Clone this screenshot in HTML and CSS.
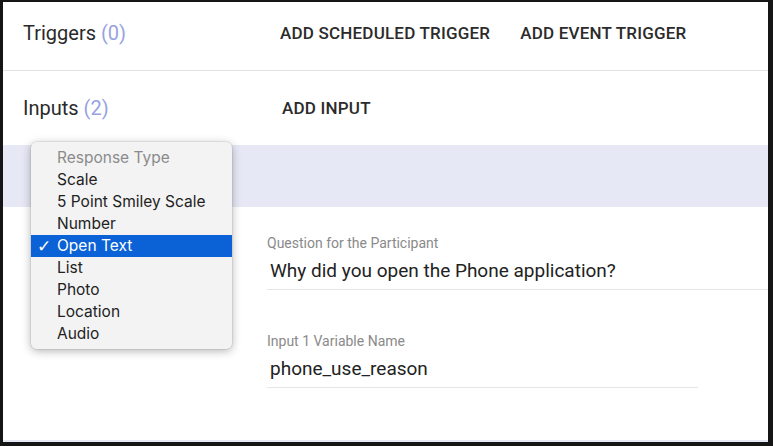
FILE: index.html
```html
<!DOCTYPE html>
<html lang="en">
<head>
    <meta charset="UTF-8">
    <meta name="viewport" content="width=device-width, initial-scale=1.0">
    <title>Inputs</title>
    <link rel="stylesheet" href="styles.css">
</head>
<body>
    <div class="frame">
        <div class="row">
            <h2 class="row-title">Triggers <span class="count">(0)</span></h2>
            <div class="actions">
                <button class="flat">Add Scheduled Trigger</button>
                <button class="flat">Add Event Trigger</button>
            </div>
        </div>
        <div class="row inputs">
            <h2 class="row-title">Inputs <span class="count">(2)</span></h2>
            <div class="actions">
                <button class="flat">Add Input</button>
            </div>
        </div>
        <div class="band"></div>
        <div class="fields">
            <div class="field wide">
                <label>Question for the Participant</label>
                <div class="value">Why did you open the Phone application?</div>
            </div>
            <div class="field">
                <label>Input 1 Variable Name</label>
                <div class="value">phone_use_reason</div>
            </div>
        </div>
        <div class="band thin"></div>

        <ul class="menu">
            <li class="menu-head">Response Type</li>
            <li>Scale</li>
            <li>5 Point Smiley Scale</li>
            <li>Number</li>
            <li class="selected"><span class="check">&#10003;</span>Open Text</li>
            <li>List</li>
            <li>Photo</li>
            <li>Location</li>
            <li>Audio</li>
        </ul>
    </div>
</body>
</html>
```

FILE: styles.css
```css
body {
    margin: 0;
    background: white;
    font-family: Roboto, "Liberation Sans", sans-serif;
    color: #222;
}
.frame {
    position: relative;
    height: 440px;
    border-style: solid;
    border-color: #151515;
    border-width: 2px 5px 4px 3px;
    display: flex;
    flex-direction: column;
    overflow: hidden;
}
.row {
    display: flex;
    align-items: center;
    height: 62px;
    padding: 0 0 6px 20px;
    border-bottom: 1px solid #e2e2e2;
}
.row.inputs {
    height: 74px;
    padding-bottom: 0;
    border-bottom: none;
}
.row-title {
    width: 249px;
    margin: 0;
    font-size: 20px;
    font-weight: 400;
    color: #2a2a2a;
}
.count {
    color: #97a3e2;
}
.actions {
    display: flex;
    gap: 14px;
}
.flat {
    background: none;
    border: none;
    padding: 6px 8px;
    font-family: Roboto, sans-serif;
    font-size: 17px;
    font-weight: 500;
    letter-spacing: 0.2px;
    text-transform: uppercase;
    color: #2b2b2b;
    cursor: pointer;
}
.inputs .flat {
    margin-left: 2px;
}
.band {
    height: 62px;
    background: #e6e8f5;
}
.band.thin {
    height: 2px;
    margin-top: auto;
}
.fields {
    padding: 28px 0 0 264px;
}
.field {
    width: 431px;
    margin-bottom: 43px;
    border-bottom: 1px solid #e6e6e6;
}
.field.wide {
    width: auto;
}
.field label {
    display: block;
    font-size: 14px;
    color: #8a8a8a;
    line-height: 17px;
}
.field .value {
    padding: 6px 0 5px 3px;
    font-size: 19px;
    line-height: 26px;
    color: #222;
}
.menu {
    position: absolute;
    left: 28px;
    top: 140px;
    width: 201px;
    margin: 0;
    padding: 5px 0 4px;
    list-style: none;
    background: #f3f3f3;
    border-radius: 6px;
    box-shadow: 0 2px 10px rgba(0, 0, 0, 0.3), 0 0 0 1px rgba(0, 0, 0, 0.06);
    font-family: Inter, "Liberation Sans", sans-serif;
    font-size: 15.5px;
}
.menu li {
    position: relative;
    height: 22px;
    line-height: 22px;
    padding-left: 26px;
    color: #222;
}
.menu .menu-head {
    color: #8b8b8b;
}
.menu .selected {
    background: #0b62d6;
    color: white;
}
.check {
    position: absolute;
    left: 6px;
    font-family: "DejaVu Sans", sans-serif;
    font-size: 17px;
    font-weight: bold;
}
```
